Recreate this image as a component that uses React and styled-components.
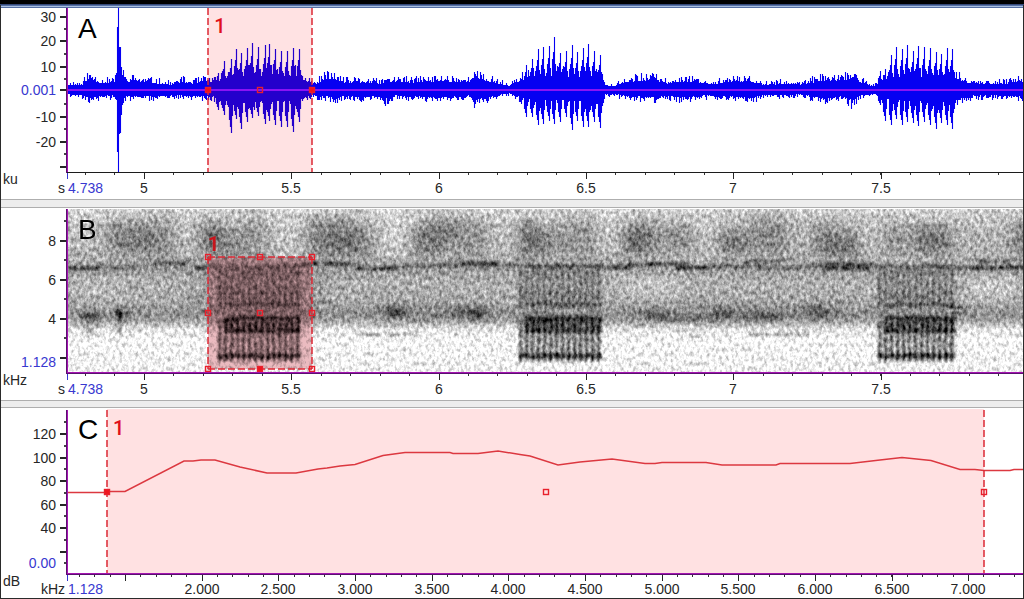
import React from "react";
import styled, { createGlobalStyle } from "styled-components";

const GlobalStyle = createGlobalStyle`
  body { margin: 0; background: #fff; }
`;

const Window = styled.main`
  border: solid #2a2a2a;
  border-width: 0 1px 1px;
  background: #fff;
  font: 14px/16px "Liberation Sans", Arial, sans-serif;
  color: #262626;
`;
const TitleEdge = styled.div`
  height: 4px;
  margin: 0 -1px;
  background: #000;
  border-bottom: 1px solid #34497a;
`;
const TitleTrim = styled.div`
  height: 1px;
  background: #a9bfe0;
  border: solid #5670a4;
  border-width: 1px 0;
`;
const Divider = styled.div`
  height: ${(p) => p.$size}px;
  box-sizing: border-box;
  background: #ededed;
  border: solid #aeaeae;
  border-width: 1px 0;
`;
const Panel = styled.section`
  display: grid;
  grid-template-columns: 65px minmax(0, 1fr);
`;
const Plot = styled.div`
  position: relative;
  height: ${(p) => p.$height}px;
`;
const Drawing = styled.svg`
  display: block;
  width: 100%;
  height: ${(p) => p.$height}px;
  overflow: hidden;
`;
const Corner = styled.div`
  display: flex;
  justify-content: space-between;
  align-items: flex-start;
  padding: 0 1px 0 2px;
`;
const Unit = styled.span`
  margin-top: ${(p) => p.$drop || 0}px;
  line-height: 12px;
`;
const Letter = styled.h2`
  position: absolute;
  top: ${(p) => p.$top}px;
  left: 12px;
  margin: 0;
  font-size: 28px;
  line-height: 32px;
  font-weight: 400;
  color: #000;
`;
const SelectionTag = styled.span`
  position: absolute;
  top: ${(p) => p.$top}px;
  left: ${(p) => p.$left}%;
  font: ${(p) => (p.$bold ? 700 : 500)} 20px/24px Roboto, sans-serif;
  color: ${(p) => (p.$bold ? "#c8141c" : "#e0101c")};
`;

const X0 = 66;
const XW = 957;
const pct = (x) => `${((x - X0) / XW) * 100}%`;

function YAxis({ top, height, majors, minors, origin }) {
  return (
    <Drawing $height={height} viewBox={`1 ${top} 65 ${height}`} fontSize="14" textAnchor="end">
      {majors.map(([y, label]) => (
        <g key={y}>
          <rect x="60" y={y - 1} width="6" height="2" fill="#262626" />
          {label && <text x="56" y={y + 5} fill={label === origin.label ? "#3838d0" : "#262626"}>{label}</text>}
        </g>
      ))}
      {minors.map((y) => <rect key={y} x="64" y={y - 1} width="2" height="2" fill="#444" />)}
      {origin.y && <text x="56" y={origin.y} fill="#3838d0">{origin.label}</text>}
    </Drawing>
  );
}

function XAxis({ height, baseline, start, majors, minors }) {
  return (
    <Drawing $height={height} fontSize="14" textAnchor="middle">
      <rect x="1" y="0" width="1" height="6" fill="#3838d0" />
      <text x="2" y={baseline} textAnchor="start" fill="#3838d0">{start}</text>
      {minors.map((x) => <rect key={x} x={pct(x)} y="0" width="1" height="2" fill="#333" />)}
      {majors.map(([x, label]) => (
        <g key={x}>
          <rect x={pct(x)} y="0" width="1" height="6" fill="#262626" />
          <text x={pct(x)} y={baseline} fill="#262626">{label}</text>
        </g>
      ))}
    </Drawing>
  );
}

const Handle = ({ x, y, solid }) => (
  <rect x={x - 2.5} y={y - 2.5} width="5" height="5" fill={solid ? "#f0141e" : "none"} stroke="#e8202c" strokeWidth="1.4" />
);
const Dash = (p) => <line stroke="#dc2834" strokeWidth="1.5" strokeDasharray="7 3" {...p} />;

const AxisSides = ({ top, bottom, plainBase }) => (
  <g>
    <rect x="66" y={bottom - 1} width="957" height="1" fill={plainBase ? "#1c1c1c" : "#5a1070"} />
    {!plainBase && <rect x="67" y={bottom - 2} width="956" height="1" fill="#a414b0" />}
    <rect x="66" y={top} width="1" height={bottom - top} fill="#5a1070" />
    <rect x="67" y={top} width="1" height={bottom - top - 1} fill="#a414b0" />
  </g>
);

function random(seed) {
  let s = seed;
  return () => {
    s = (s * 1664525 + 1013904223) % 4294967296;
    return s / 4294967296;
  };
}

/* ---------- waveform ---------- */
const ENVELOPE = [
  [68, 8, 7], [82, 8, 8], [87, 17, 12], [92, 17, 13], [99, 11, 9], [112, 12, 9], [122, 21, 18], [126, 12, 10],
  [134, 15, 10], [142, 12, 9], [150, 12, 10], [165, 9, 9], [172, 8, 9], [181, 13, 8], [190, 10, 9], [207, 13, 10],
  [216, 12, 11], [222, 18, 15], [232, 23, 18], [250, 23, 18], [280, 23, 18], [299, 22, 18], [302, 15, 12], [310, 11, 8],
  [316, 10, 9], [325, 18, 10], [336, 16, 12], [345, 11, 9], [362, 12, 11], [378, 10, 10], [384, 12, 15], [395, 13, 9],
  [410, 12, 10], [425, 13, 11], [441, 14, 11], [460, 13, 10], [468, 12, 9], [473, 20, 17], [483, 15, 12], [496, 11, 9],
  [509, 6, 5], [515, 12, 9], [524, 17, 14], [535, 21, 16], [560, 21, 17], [601, 21, 18], [605, 8, 7], [612, 6, 6],
  [625, 12, 9], [637, 15, 10], [655, 15, 12], [667, 10, 9], [684, 14, 12], [695, 13, 10], [710, 9, 8], [726, 12, 10],
  [752, 13, 12], [762, 8, 8], [785, 10, 8], [800, 8, 7], [812, 12, 10], [824, 15, 14], [840, 14, 9], [852, 19, 17],
  [860, 13, 9], [874, 5, 6], [880, 14, 11], [890, 19, 16], [920, 21, 18], [952, 21, 18], [956, 19, 16], [963, 13, 12],
  [972, 10, 9], [986, 10, 9], [1003, 10, 9], [1018, 13, 10], [1024, 12, 10],
];
const PULSES = [
  [218, 17, 20], [224, 29, 25], [231, 31, 43], [236, 41, 29], [241, 37, 39], [247, 42, 32], [252, 47, 28],
  [258, 43, 26], [265, 45, 34], [269, 46, 31], [275, 41, 35], [281, 39, 37], [287, 39, 37], [293, 42, 42], [299, 41, 32],
  [526, 25, 27], [532, 31, 27], [538, 41, 35], [543, 43, 34], [549, 44, 31], [554, 53, 34], [560, 37, 32],
  [566, 39, 27], [572, 45, 40], [577, 38, 31], [583, 42, 37], [588, 46, 37], [594, 39, 32], [600, 35, 38],
  [880, 19, 15], [885, 21, 31], [891, 35, 35], [896, 43, 29], [902, 41, 35], [907, 45, 32], [913, 39, 33],
  [918, 44, 36], [924, 43, 32], [930, 42, 35], [936, 38, 39], [941, 36, 33], [947, 42, 35], [952, 41, 39],
];
const SPIKE = { 117: [63, 62], 118: [82, 82], 119: [43, 44], 120: [43, 43], 121: [23, 25] };

function wavePath() {
  const next = random(11);
  let d = "";
  for (let x = 68; x < 1023; x += 1) {
    let i = 0;
    while (ENVELOPE[i + 1][0] < x) i += 1;
    const [xa, ua, da] = ENVELOPE[i];
    const [xb, ub, db] = ENVELOPE[i + 1];
    const t = (x - xa) / (xb - xa);
    const a = next();
    const b = next();
    let up = (ua + (ub - ua) * t) * (0.6 + 0.55 * a * a);
    let down = (da + (db - da) * t) * (0.6 + 0.55 * b * b);
    PULSES.forEach(([px, pu, pd]) => {
      if (px === x) { up = pu; down = pd; }
      if (px === x + 1) { up = Math.max(up, pu * 0.72); down = Math.max(down, pd * 0.85); }
      if (px === x - 1) { up = Math.max(up, pu * 0.5); down = Math.max(down, pd * 0.6); }
      if (px === x + 2) { up = Math.max(up, pu * 0.58); down = Math.max(down, pd * 0.7); }
    });
    if (SPIKE[x]) [up, down] = SPIKE[x];
    d += `M${x + 0.5} ${Math.round(90 - up)}V${Math.round(90 + down)}`;
  }
  return d;
}
const WAVE = wavePath();

function Waveform() {
  return (
    <Drawing $height={165} viewBox={`${X0} 8 ${XW} 165`} preserveAspectRatio="none" role="img" aria-label="Waveform">
      <clipPath id="picked"><rect x="208" y="8" width="104" height="164" /></clipPath>
      <rect x="208" y="8" width="104" height="164" fill="#ffe2e3" />
      <path d={WAVE} stroke="#0600f2" strokeWidth="1.1" />
      <path d={WAVE} stroke="#2400cc" strokeWidth="1.1" clipPath="url(#picked)" />
      <rect x="67" y="89" width="956" height="2" fill="#8c12f4" />
      <Dash x1="208" y1="8" x2="208" y2="172" />
      <Dash x1="312" y1="8" x2="312" y2="172" />
      <Handle x={208} y={90} solid />
      <Handle x={260} y={90} />
      <Handle x={312} y={90} solid />
      <AxisSides top={8} bottom={173} plainBase />
    </Drawing>
  );
}

/* ---------- spectrogram ---------- */
const CLOUDS = [
  [100, 220, 56, 30, 0.2], [118, 232, 34, 22, 0.16], [150, 218, 34, 40, 0.16], [194, 222, 30, 30, 0.3], [212, 230, 36, 26, 0.16], [240, 218, 30, 36, 0.14],
  [306, 218, 50, 38, 0.24], [322, 232, 34, 18, 0.2], [350, 226, 26, 30, 0.2],
  [408, 228, 36, 26, 0.3], [426, 216, 34, 26, 0.2], [450, 220, 40, 34, 0.16], [514, 222, 24, 34, 0.34], [534, 230, 24, 24, 0.26], [562, 218, 40, 38, 0.16],
  [618, 228, 34, 26, 0.36], [636, 220, 18, 18, 0.2], [660, 226, 42, 24, 0.2], [716, 232, 30, 20, 0.36], [748, 214, 40, 40, 0.18], [764, 228, 14, 14, 0.2],
  [814, 222, 22, 34, 0.24], [828, 236, 30, 20, 0.34], [850, 224, 12, 30, 0.2], [880, 226, 24, 24, 0.2], [910, 224, 40, 24, 0.22], [918, 234, 32, 20, 0.24],
  [1014, 222, 12, 34, 0.36],
  [190, 272, 140, 40, 0.08], [372, 304, 120, 16, 0.12], [620, 308, 110, 14, 0.12], [716, 306, 90, 16, 0.12], [806, 302, 40, 18, 0.14],
];
const LIGHTS = [
  [183, 212, 8, 40, 0.4], [276, 212, 20, 44, 0.25], [384, 212, 20, 44, 0.4], [500, 212, 10, 44, 0.3], [604, 212, 10, 44, 0.35],
  [700, 212, 10, 44, 0.35], [866, 212, 8, 44, 0.25], [970, 278, 46, 20, 0.35], [620, 275, 60, 22, 0.25], [72, 284, 50, 14, 0.2], [68, 212, 30, 36, 0.2],
];
const SPOTS = [
  [91, 316, 11, 4, 0.5], [119, 314, 3, 5, 1], [119, 314, 3, 5, 0.8], [124, 314, 7, 3, 0.5], [90, 328, 8, 8, 0.2], [119, 325, 2, 12, 0.4],
  [395, 311, 11, 6, 0.35], [398, 314, 6, 3, 0.4], [477, 315, 8, 4, 0.5], [470, 312, 20, 6, 0.2], [656, 316, 14, 4, 0.35],
  [722, 314, 10, 4, 0.35], [762, 317, 22, 4, 0.35], [818, 312, 10, 8, 0.25], [690, 318, 30, 3, 0.25], [540, 320, 20, 6, 0.2],
];
const TRACE = [
  [68, 268, 30, 0.7], [98, 267, 34, 0.35], [132, 264, 24, 0.3], [154, 263, 34, 0.65], [195, 267, 12, 0.7], [208, 267, 50, 0.4],
  [258, 266, 50, 0.5], [313, 263, 30, 0.75], [330, 264, 26, 0.4], [356, 268, 40, 0.65], [390, 266, 52, 0.45], [442, 264, 56, 0.7],
  [460, 262, 40, 0.4], [500, 265, 20, 0.4], [520, 266, 82, 0.65], [608, 267, 24, 0.7], [628, 264, 26, 0.55], [650, 263, 34, 0.55],
  [676, 267, 32, 0.85], [710, 266, 50, 0.45], [744, 261, 40, 0.45], [758, 267, 44, 0.4], [804, 265, 68, 0.6], [822, 268, 48, 0.6],
  [822, 263, 50, 0.4], [876, 266, 78, 0.55], [955, 267, 24, 0.5], [974, 267, 49, 0.85], [978, 261, 10, 0.6], [994, 261, 4, 0.6], [1002, 261, 8, 0.6],
];
const FAINT = [[359, 335, 20], [385, 335, 14], [403, 335, 14], [690, 337, 10], [750, 335, 18], [774, 335, 36]];
const BURSTS = [[218, 223, 301], [519, 525, 602], [878, 883, 956]];

function Burst({ from, dense, to }) {
  const cols = [];
  for (let x = from; x < to - 2; x += 6) cols.push(x);
  return (
    <g fill="#101010">
      <rect x={from} y="269" width={to - from} height="50" opacity="0.06" />
      <rect x={from + 2} y="320" width={to - from - 2} height="36" opacity="0.16" />
      {cols.map((x) => (
        <g key={x}>
          <rect x={x} y="270" width="3" height="24" opacity="0.32" />
          <rect x={x} y="292" width="3" height="16" opacity="0.48" />
          <rect x={x} y="322" width="3" height="40" opacity="0.66" />
          <ellipse cx={x + 2} cy="356" rx="2.6" ry="3.2" opacity="0.95" />
          {x >= dense - 3 && <rect x={x} y="318" width="4" height="15" opacity="0.75" />}
        </g>
      ))}
      <rect x={dense + 3} y="303" width={to - dense - 3} height="3" opacity="0.35" />
      <rect x={dense + 2} y="316" width={to - dense - 2} height="4" opacity="0.68" />
      <rect x={dense} y="328" width={to - dense} height="5" opacity="0.52" />
    </g>
  );
}

function Spectrogram() {
  const next = random(5);
  return (
    <Drawing $height={166} viewBox={`${X0} 208 ${XW} 166`} preserveAspectRatio="none" role="img" aria-label="Spectrogram">
      <defs>
        <linearGradient id="floor" x1="0" y1="0" x2="0" y2="1">
          <stop offset="0" stopColor="#d2d2d2" />
          <stop offset="0.12" stopColor="#b8b8b8" />
          <stop offset="0.3" stopColor="#aeaeae" />
          <stop offset="0.36" stopColor="#989898" />
          <stop offset="0.44" stopColor="#b0b0b0" />
          <stop offset="0.56" stopColor="#aaa" />
          <stop offset="0.64" stopColor="#909090" />
          <stop offset="0.68" stopColor="#a4a4a4" />
          <stop offset="0.73" stopColor="#e4e4e4" />
          <stop offset="0.8" stopColor="#f7f7f7" />
          <stop offset="1" stopColor="#f0f0f0" />
        </linearGradient>
        <filter id="soft" x="-5%" y="-20%" width="110%" height="140%"><feGaussianBlur stdDeviation="7 6" /></filter>
        <filter id="smear" x="-5%" y="-20%" width="110%" height="140%"><feGaussianBlur stdDeviation="2" /></filter>
        <filter id="fine" x="-5%" y="-5%" width="110%" height="110%"><feGaussianBlur stdDeviation="0.8" /></filter>
        <filter id="grain" filterUnits="userSpaceOnUse" x="66" y="208" width="957" height="166" colorInterpolationFilters="sRGB">
          <feTurbulence type="fractalNoise" baseFrequency="0.31 0.21" numOctaves="3" seed="7" />
          <feColorMatrix values="1 0 0 0 0  1 0 0 0 0  1 0 0 0 0  0 0 0 0 1" result="n" />
          <feComposite in="SourceGraphic" in2="n" operator="arithmetic" k1="0" k2="1" k3="0.76" k4="-0.38" />
        </filter>
      </defs>
      <g filter="url(#grain)">
        <rect x="66" y="208" width="957" height="166" fill="url(#floor)" />
        <g filter="url(#soft)">
          {CLOUDS.map(([x, y, w, h, o]) => <rect key={`${x}-${y}`} x={x} y={y} width={w} height={h} opacity={o} />)}
          {LIGHTS.map(([x, y, w, h, o]) => <rect key={`${x}-${y}`} x={x} y={y} width={w} height={h} fill="#fff" opacity={o} />)}
        </g>
        <g filter="url(#smear)">
          {SPOTS.map(([x, y, rx, ry, o]) => <ellipse key={`${x}-${y}-${o}`} cx={x} cy={y} rx={rx} ry={ry} opacity={o} />)}
        </g>
        <g filter="url(#fine)">
          {TRACE.map(([x, y, w, o]) => {
            const bits = [];
            for (let i = 0; i < w; i += 4) bits.push(<rect key={i} x={x + i} y={y - 2 + Math.round(next())} width="4" height="4" opacity={o * (0.45 + 0.55 * next())} />);
            return <g key={`${x}-${y}`}>{bits}</g>;
          })}
          {FAINT.map(([x, y, w]) => <rect key={x} x={x} y={y - 2} width={w} height="3" opacity="0.3" />)}
          {BURSTS.map(([from, dense, to]) => <Burst key={from} from={from} dense={dense} to={to} />)}
          <rect x="950" y="306" width="14" height="3" opacity="0.4" />
          <rect x="950" y="312" width="14" height="3" opacity="0.35" />
        </g>
      </g>
      <rect x="66" y="208" width="957" height="1" fill="#fff" />
      <rect x="208" y="257" width="104" height="112" fill="#f0c8cc" style={{ mixBlendMode: "multiply" }} />
      <rect x="208" y="257" width="104" height="112" fill="#b02030" opacity="0.07" />
      <Dash x1="208" y1="257" x2="208" y2="369" />
      <Dash x1="312" y1="257" x2="312" y2="369" />
      <Dash x1="208" y1="257" x2="312" y2="257" />
      <Dash x1="208" y1="369" x2="312" y2="369" />
      {[257, 313, 369].map((y) => [208, 260, 312].map((x) => <Handle key={`${x}-${y}`} x={x} y={y} solid={x === 260 && y === 369} />))}
      <AxisSides top={209} bottom={374} />
    </Drawing>
  );
}

/* ---------- spectrum slice ---------- */
const CURVE = "68,492.5 107,492.5 107,491.5 125,491.5 184,461 193,461 201,460 215,460 240,467 267,473 296,473 318,469 327,468 340,466 355,464.5 383,455.5 405,452.5 450,452.5 453,453.5 478,453.5 498,451 520,454.5 530,456 558,465 580,462 612,459 645,463.5 655,463.5 662,462.5 706,462.5 722,465 776,465 780,463.5 850,463.5 880,460 902,457.5 931,460.5 960,469.5 975,469.5 984,470.5 1010,470.5 1014,469.5 1023,469.5";

function Spectrum() {
  return (
    <Drawing $height={167} viewBox={`${X0} 408 ${XW} 167`} preserveAspectRatio="none" role="img" aria-label="Spectrum slice">
      <rect x="107" y="409" width="877" height="164" fill="#ffe1e2" />
      <polyline points={CURVE} fill="none" stroke="#dc3840" strokeWidth="1.5" />
      <Dash x1="107" y1="410" x2="107" y2="573" />
      <Dash x1="984" y1="410" x2="984" y2="573" />
      <Handle x={107} y={492} solid />
      <Handle x={546} y={492} />
      <Handle x={984} y={492} />
      <AxisSides top={410} bottom={575} />
    </Drawing>
  );
}

const range = (from, step, count) => Array.from({ length: count }, (_, i) => Math.round(from + step * i));
const timeMajors = ["5", "5.5", "6", "6.5", "7", "7.5"].map((t, i) => [Math.round(144 + i * 147.3), t]);
const timeMinors = range(85, 29.46, 32);
const freqMajors = ["", "2.000", "2.500", "3.000", "3.500", "4.000", "4.500", "5.000", "5.500", "6.000", "6.500", "7.000"].map((t, i) => [Math.round(125 + i * 76.65), t]);
const freqMinors = range(79, 15.33, 62);

export default function App() {
  return (
    <>
      <GlobalStyle />
      <Window>
        <TitleEdge />
        <TitleTrim />
        <Panel aria-label="Waveform view">
          <YAxis
            top={8}
            height={165}
            majors={[[17, "30"], [41, "20"], [67, "10"], [90, "0.001"], [117, "-10"], [142, "-20"], [167, ""]]}
            minors={[29, 54, 79, 104, 129, 154]}
            origin={{ label: "0.001" }}
          />
          <Plot $height={165}>
            <Waveform />
            <Letter $top={5}>A</Letter>
            <SelectionTag $top={6} $left={15.5}>1</SelectionTag>
          </Plot>
          <Corner>
            <Unit>ku</Unit>
            <Unit $drop={9}>s</Unit>
          </Corner>
          <XAxis height={26} baseline={20} start="4.738" majors={timeMajors} minors={timeMinors} />
        </Panel>
        <Divider $size={9} />
        <Panel aria-label="Spectrogram view">
          <YAxis
            top={208}
            height={166}
            majors={[[241, "8"], [280, "6"], [319, "4"], [358, ""]]}
            minors={[221, 260, 299, 338]}
            origin={{ label: "1.128", y: 367 }}
          />
          <Plot $height={166}>
            <Spectrogram />
            <Letter $top={6}>B</Letter>
            <SelectionTag $top={24} $left={14.8} $bold>1</SelectionTag>
          </Plot>
          <Corner>
            <Unit>kHz</Unit>
            <Unit $drop={9}>s</Unit>
          </Corner>
          <XAxis height={26} baseline={20} start="4.738" majors={timeMajors} minors={timeMinors} />
        </Panel>
        <Divider $size={8} />
        <Panel aria-label="Spectrum slice view">
          <YAxis
            top={408}
            height={167}
            majors={[[434, "120"], [458, "100"], [481, "80"], [505, "60"], [528, "40"], [552, ""]]}
            minors={[422, 446, 469, 493, 516, 540, 563]}
            origin={{ label: "0.00", y: 568 }}
          />
          <Plot $height={167}>
            <Spectrum />
            <Letter $top={6}>C</Letter>
            <SelectionTag $top={8} $left={4.9}>1</SelectionTag>
          </Plot>
          <Corner>
            <Unit>dB</Unit>
            <Unit $drop={8}>kHz</Unit>
          </Corner>
          <XAxis height={23} baseline={19} start="1.128" majors={freqMajors} minors={freqMinors} />
        </Panel>
      </Window>
    </>
  );
}
